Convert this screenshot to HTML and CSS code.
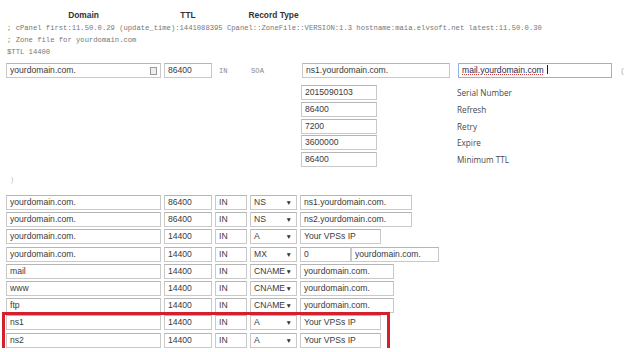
FILE: index.html
```html
<!DOCTYPE html>
<html lang="en">
<head>
  <meta charset="UTF-8">
  <title>Zone Editor</title>
  <link rel="stylesheet" href="styles.css">
</head>
<body>

  <div class="head">
    <div class="c-domain">Domain</div>
    <div class="c-ttl">TTL</div>
    <div class="c-in"></div>
    <div class="c-type">Record Type</div>
  </div>

  <div class="comments">
    <div>; cPanel first:11.50.0.29 (update_time):1441088395 Cpanel::ZoneFile::VERSION:1.3 hostname:maia.elvsoft.net latest:11.50.0.30</div>
    <div>; Zone file for yourdomain.com</div>
    <div>$TTL 14400</div>
  </div>

  <div class="row soa">
    <div class="box c-domain">yourdomain.com.<span class="fill-icon"></span></div>
    <div class="box c-ttl">86400</div>
    <div class="c-in plain">IN</div>
    <div class="c-type plain">SOA</div>
    <div class="box soa-ns">ns1.yourdomain.com.</div>
    <div class="box soa-mail focused"><span class="spell">mail.yourdomain.com</span><span class="caret"></span></div>
    <div class="paren">(</div>
  </div>

  <div class="serials">
    <div class="serial"><div class="box">2015090103</div><span>Serial Number</span></div>
    <div class="serial"><div class="box">86400</div><span>Refresh</span></div>
    <div class="serial"><div class="box">7200</div><span>Retry</span></div>
    <div class="serial"><div class="box">3600000</div><span>Expire</span></div>
    <div class="serial"><div class="box">86400</div><span>Minimum TTL</span></div>
  </div>

  <div class="close-mark">)</div>

  <div class="records">
    <div class="row">
      <div class="box c-domain">yourdomain.com.</div>
      <div class="box c-ttl">86400</div>
      <div class="box c-in">IN</div>
      <div class="box c-type select">NS<span class="arrow">&#9660;</span></div>
      <div class="box v-ns">ns1.yourdomain.com.</div>
    </div>
    <div class="row">
      <div class="box c-domain">yourdomain.com.</div>
      <div class="box c-ttl">86400</div>
      <div class="box c-in">IN</div>
      <div class="box c-type select">NS<span class="arrow">&#9660;</span></div>
      <div class="box v-ns">ns2.yourdomain.com.</div>
    </div>
    <div class="row">
      <div class="box c-domain">yourdomain.com.</div>
      <div class="box c-ttl">14400</div>
      <div class="box c-in">IN</div>
      <div class="box c-type select">A<span class="arrow">&#9660;</span></div>
      <div class="box v-a">Your VPSs IP</div>
    </div>
    <div class="row">
      <div class="box c-domain">yourdomain.com.</div>
      <div class="box c-ttl">14400</div>
      <div class="box c-in">IN</div>
      <div class="box c-type select">MX<span class="arrow">&#9660;</span></div>
      <div class="box v-prio">0</div>
      <div class="box v-mx">yourdomain.com.</div>
    </div>
    <div class="row">
      <div class="box c-domain">mail</div>
      <div class="box c-ttl">14400</div>
      <div class="box c-in">IN</div>
      <div class="box c-type select">CNAME<span class="arrow">&#9660;</span></div>
      <div class="box v-cname">yourdomain.com.</div>
    </div>
    <div class="row">
      <div class="box c-domain">www</div>
      <div class="box c-ttl">14400</div>
      <div class="box c-in">IN</div>
      <div class="box c-type select">CNAME<span class="arrow">&#9660;</span></div>
      <div class="box v-cname">yourdomain.com.</div>
    </div>
    <div class="row">
      <div class="box c-domain">ftp</div>
      <div class="box c-ttl">14400</div>
      <div class="box c-in">IN</div>
      <div class="box c-type select">CNAME<span class="arrow">&#9660;</span></div>
      <div class="box v-cname">yourdomain.com.</div>
    </div>

    <div class="highlight">
      <div class="row">
        <div class="box c-domain">ns1</div>
        <div class="box c-ttl">14400</div>
        <div class="box c-in">IN</div>
        <div class="box c-type select">A<span class="arrow">&#9660;</span></div>
        <div class="box v-a">Your VPSs IP</div>
      </div>
      <div class="row">
        <div class="box c-domain">ns2</div>
        <div class="box c-ttl">14400</div>
        <div class="box c-in">IN</div>
        <div class="box c-type select">A<span class="arrow">&#9660;</span></div>
        <div class="box v-a">Your VPSs IP</div>
      </div>
    </div>
  </div>

</body>
</html>
```

FILE: styles.css
```css
body {
  margin: 0;
  padding: 0;
  background: #fff;
  font-family: "Liberation Sans", Arial, sans-serif;
  font-size: 8.6px;
  color: #3a3a3a;
}

/* columns */
.head, .row {
  display: flex;
  gap: 3px;
  padding-left: 6px;
}
.c-domain { width: 155px; }
.c-ttl { width: 48px; }
.c-in { width: 32px; }
.c-type { width: 47px; }

.head {
  height: 22px;
  padding-top: 9px;
  box-sizing: border-box;
  line-height: 12px;
  font-size: 8.4px;
  font-weight: bold;
  color: #333;
}
.head > div {
  display: flex;
  justify-content: center;
  white-space: nowrap;
}

.comments {
  font-family: "Liberation Mono", "Courier New", monospace;
  font-size: 7.2px;
  line-height: 12px;
  color: #777;
  padding-left: 7px;
  white-space: nowrap;
}

/* input look */
.box {
  box-sizing: border-box;
  height: 15px;
  line-height: 13px;
  border: 1px solid #c9c9c9;
  border-top-color: #b5b5b5;
  padding: 0 3px;
  background: #fff;
  white-space: nowrap;
  overflow: hidden;
  position: relative;
}

.soa {
  margin-top: 5px;
  align-items: center;
}
.plain {
  font-family: "Liberation Mono", "Courier New", monospace;
  font-size: 7.2px;
  color: #888;
  padding-left: 4px;
  box-sizing: border-box;
}
.soa .c-type { padding-left: 1px; }
.soa-ns {
  width: 148px;
  margin-left: 2px;
}
.soa-mail {
  width: 154px;
  margin-left: 5px;
}
.focused {
  border-color: #8cb6e0;
  color: #2b2b55;
}
.spell {
  text-decoration: underline dotted #d04040;
  text-decoration-thickness: 1px;
  text-underline-offset: 1px;
}
.caret {
  display: inline-block;
  width: 1px;
  height: 9px;
  background: #222;
  margin-left: 3px;
  vertical-align: -1px;
}
.paren {
  margin-left: 6px;
  color: #aaa;
  font-size: 8px;
}
.fill-icon {
  position: absolute;
  right: 3px;
  top: 3px;
  width: 5px;
  height: 6px;
  border: 1px solid #9a9a9a;
  background: #eee;
}

.serials {
  margin-top: 7px;
  padding-left: 301px;
  display: flex;
  flex-direction: column;
  gap: 1.75px;
}
.serial {
  display: flex;
  align-items: center;
}
.serial .box {
  width: 76px;
}
.serial span {
  margin-left: 80px;
  font-family: "Open Sans", "Liberation Sans", sans-serif;
  font-size: 8.2px;
  color: #4a4a4a;
}

.close-mark {
  margin-top: 7px;
  height: 12px;
  line-height: 12px;
  padding-left: 11px;
  color: #bbb;
  font-size: 7px;
}

.records {
  margin-top: 9px;
  display: flex;
  flex-direction: column;
  gap: 2.2px;
}
.highlight {
  position: relative;
  display: flex;
  flex-direction: column;
  gap: 2.2px;
}
.highlight::after {
  content: "";
  position: absolute;
  left: 2px;
  top: -3px;
  width: 388px;
  bottom: -3px;
  border: 3px solid #d4202c;
  box-sizing: border-box;
}

.select {
  display: flex;
  justify-content: space-between;
  align-items: center;
  padding-right: 4px;
}
.arrow {
  font-size: 6.5px;
  color: #333;
}

.v-ns { width: 112px; }
.v-a { width: 81px; }
.v-prio { width: 51px; }
.v-mx { width: 88px; margin-left: -3px; }
.v-cname { width: 94px; }
```
